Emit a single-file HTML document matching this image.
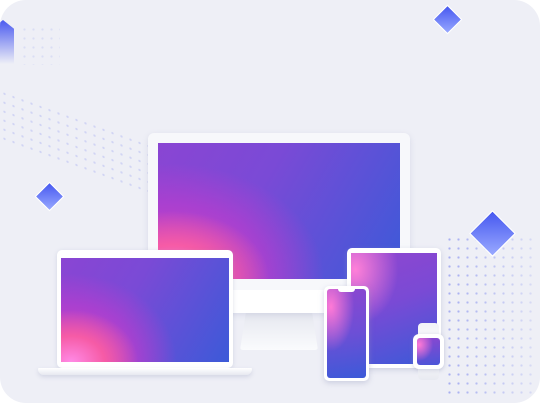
<!DOCTYPE html><html><head><style>
body{margin:0;width:540px;height:403px;overflow:hidden;background:#fff}
.bg{position:absolute;left:0;top:0;width:540px;height:403px;background:#eeeff6;border-radius:26px;overflow:hidden}
.a{position:absolute}
.scr{background:
radial-gradient(ellipse 40% 50% at 6% 100%,#ff8ae6 0%,#f65ba6 50%,rgba(240,80,170,0) 100%),
radial-gradient(ellipse 75% 100% at 5% 100%,rgba(235,70,180,.9) 0%,rgba(190,60,205,.65) 55%,rgba(150,60,210,0) 85%),
linear-gradient(120deg,#8a45d3 0%,#7a4ad6 40%,#3c5ad8 100%)}
.dia{position:absolute;transform:rotate(45deg);border:1.5px solid #fff}
.dots{position:absolute;background-image:radial-gradient(circle,#8c96ee 1px,transparent 1.3px);background-size:9px 9px}
</style></head><body><div class="bg">
<div class="dots" style="left:0;top:115px;width:150px;height:55px;transform:skewY(20deg);opacity:.3"></div>
<div class="dots" style="left:20px;top:25px;width:40px;height:40px;opacity:.2"></div>
<div class="dots" style="left:445px;top:235px;width:90px;height:165px;opacity:.75;-webkit-mask:linear-gradient(90deg,#000,rgba(0,0,0,.3))"></div>
<div class="a" style="left:-8px;top:20px;width:22px;height:44px;background:linear-gradient(#4a5af0,rgba(140,160,255,0));clip-path:polygon(0 20%,50% 0,100% 20%,100% 100%,0 100%)"></div>
<div class="dia" style="left:437px;top:9px;width:19px;height:19px;background:linear-gradient(135deg,#4658f0,#98a8ff)"></div>
<div class="dia" style="left:39px;top:186px;width:19px;height:19px;background:linear-gradient(135deg,#4658f0,#98a8ff)"></div>
<div class="dia" style="left:476px;top:217px;width:31px;height:31px;background:linear-gradient(135deg,#4658f0,#9aaaff)"></div>
<div class="a" style="left:240px;top:310px;width:78px;height:40px;background:linear-gradient(#e4e6ee,#fafbfd);clip-path:polygon(8% 0,92% 0,100% 100%,0 100%);border-radius:3px"></div>
<div class="a" style="left:148px;top:133px;width:262px;height:180px;background:#f7f8fb;border-radius:6px;box-shadow:0 2px 6px rgba(150,155,190,.25)"></div>
<div class="a" style="left:148px;top:290px;width:262px;height:23px;background:#fff;border-radius:0 0 6px 6px"></div>
<div class="a scr" style="left:158px;top:143px;width:242px;height:136px"></div>
<div class="a" style="left:57px;top:250px;width:176px;height:118px;background:#fff;border-radius:5px;box-shadow:0 1px 4px rgba(150,155,190,.3)"></div>
<div class="a scr" style="left:61px;top:258px;width:168px;height:104px"></div>
<div class="a" style="left:38px;top:368px;width:214px;height:7px;background:linear-gradient(#fff,#e6e8f0);border-radius:1px 1px 6px 6px;box-shadow:0 2px 4px rgba(150,155,190,.3)"></div>
<div class="a" style="left:347px;top:248px;width:94px;height:120px;background:#fff;border-radius:5px;box-shadow:0 2px 6px rgba(150,155,190,.35)"></div>
<div class="a" style="left:351px;top:253px;width:86px;height:111px;background:radial-gradient(ellipse 50% 50% at 5% 15%,#ff80d8,rgba(240,90,180,0)),linear-gradient(160deg,#9046cf 0%,#7a4ad5 45%,#3c5ad8 100%)"></div>
<div class="a" style="left:324px;top:286px;width:45px;height:95px;background:#fff;border-radius:5px;box-shadow:0 2px 6px rgba(150,155,190,.4)"></div>
<div class="a" style="left:327px;top:289px;width:39px;height:89px;border-radius:3px;background:radial-gradient(ellipse 60% 50% at 10% 20%,#ff7ad6,rgba(240,80,170,0)),linear-gradient(170deg,#8c46d0 0%,#6d4fd6 50%,#3c5ad8 100%)"></div>
<div class="a" style="left:338px;top:289px;width:17px;height:3px;background:#fff;border-radius:0 0 3px 3px"></div>
<div class="a" style="left:418px;top:323px;width:21px;height:57px;background:linear-gradient(#f2f3f7,#fff,#e8eaf1);border-radius:4px"></div>
<div class="a" style="left:413px;top:334px;width:31px;height:35px;background:#fff;border-radius:6px;box-shadow:0 1px 4px rgba(150,155,190,.4)"></div>
<div class="a" style="left:417px;top:338px;width:23px;height:27px;border-radius:3px;background:radial-gradient(ellipse 60% 60% at 10% 25%,#ff7ad6,rgba(240,80,170,0)),linear-gradient(170deg,#8c46d0,#4a56d8)"></div>
</div></body></html>
